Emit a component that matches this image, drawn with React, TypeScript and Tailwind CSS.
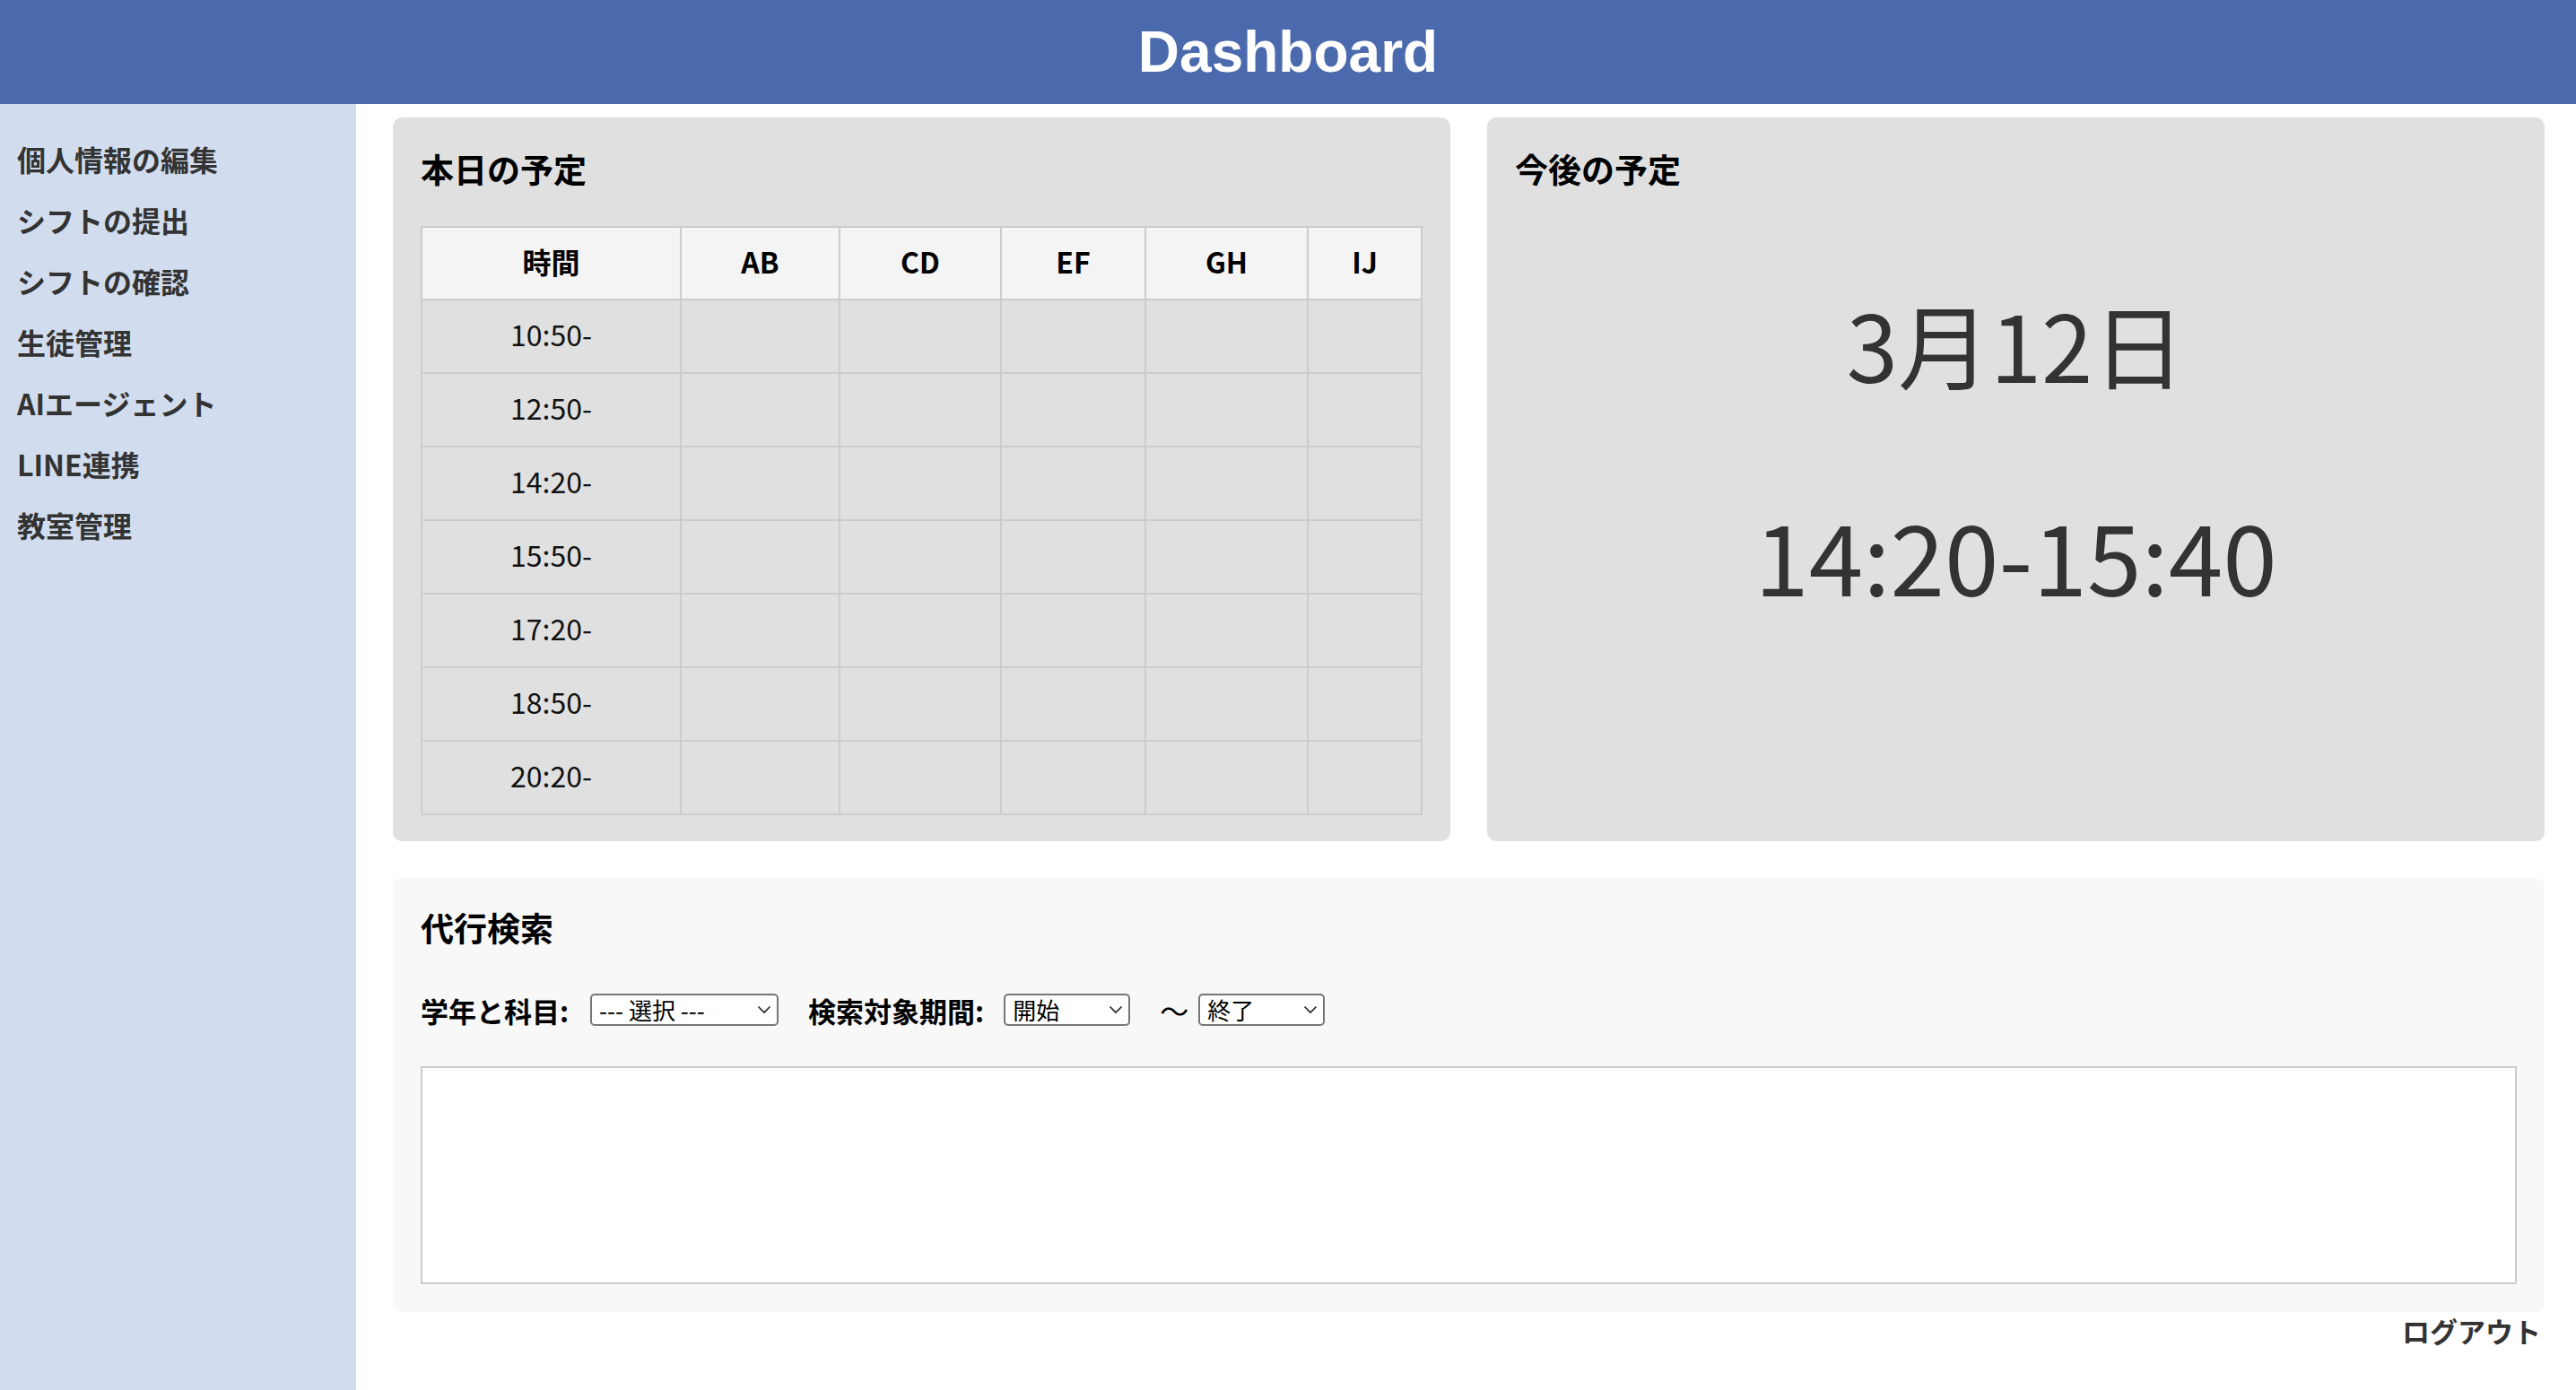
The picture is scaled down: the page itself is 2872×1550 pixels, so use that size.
import React from "react";

const navItems = [
  "個人情報の編集",
  "シフトの提出",
  "シフトの確認",
  "生徒管理",
  "AIエージェント",
  "LINE連携",
  "教室管理",
];

const times = ["10:50-", "12:50-", "14:20-", "15:50-", "17:20-", "18:50-", "20:20-"];
const cols = ["AB", "CD", "EF", "GH", "IJ"];

function Chevron() {
  return (
    <svg
      className="pointer-events-none absolute right-[8px] top-1/2 -translate-y-1/2"
      width="16"
      height="10"
      viewBox="0 0 16 10"
      fill="none"
    >
      <path d="M1.5 1.5 L8 8 L14.5 1.5" stroke="#222" strokeWidth="1.6" />
    </svg>
  );
}

function FakeSelect({ label, width }: { label: string; width: string }) {
  return (
    <div className={`relative h-[36px] ${width}`}>
      <select
        defaultValue=""
        className="h-full w-full appearance-none rounded-[5px] border-2 border-[#767676] bg-white pl-[8px] text-[26px] leading-[30px] text-black outline-none"
      >
        <option value="">{label}</option>
      </select>
      <Chevron />
    </div>
  );
}

export default function App() {
  return (
    <div className="flex min-h-screen w-full flex-col bg-white font-['Noto_Sans_CJK_JP','Noto_Sans',sans-serif] text-black">
      <header className="flex h-[116px] shrink-0 items-center justify-center bg-[#4a6aad]">
        <h1 className="font-['Liberation_Sans',Arial,sans-serif] text-[64px] font-bold leading-none text-white">
          Dashboard
        </h1>
      </header>

      <div className="flex flex-1">
        <aside className="w-[397px] shrink-0 bg-[#d1ddee] pt-[27px]">
          <ul>
            {navItems.map((item) => (
              <li
                key={item}
                className="flex h-[68px] items-center pl-[19px] text-[32px] font-bold text-[#333]"
              >
                {item}
              </li>
            ))}
          </ul>
        </aside>

        <main className="flex-1 pl-[41px] pr-[35px] pt-[15px]">
          <div className="grid h-[807px] grid-cols-2 gap-[41px]">
            <section className="rounded-[10px] bg-[#e0e0e0] px-[31px] pt-[27px]">
              <h3 className="flex h-[60px] items-center text-[37px] font-bold leading-none">
                本日の予定
              </h3>
              <table className="mt-[34px] w-full table-fixed border-collapse text-[32px]">
                <colgroup>
                  <col className="w-[289px]" />
                  <col className="w-[177px]" />
                  <col className="w-[180px]" />
                  <col className="w-[161px]" />
                  <col className="w-[181px]" />
                  <col />
                </colgroup>
                <thead>
                  <tr className="h-[81px] bg-[#f4f4f4]">
                    <th className="border-2 border-[#cccccc] pb-[6px] font-bold">時間</th>
                    {cols.map((c) => (
                      <th key={c} className="border-2 border-[#cccccc] pb-[6px] font-bold">
                        {c}
                      </th>
                    ))}
                  </tr>
                </thead>
                <tbody>
                  {times.map((t) => (
                    <tr key={t} className="h-[82px]">
                      <td className="border-2 border-[#cccccc] pb-[6px] text-center font-normal text-[#111]">
                        {t}
                      </td>
                      {cols.map((c) => (
                        <td key={c} className="border-2 border-[#cccccc]" />
                      ))}
                    </tr>
                  ))}
                </tbody>
              </table>
            </section>

            <section className="flex flex-col rounded-[10px] bg-[#e0e0e0] px-[31px] pt-[27px]">
              <h3 className="flex h-[60px] items-center text-[37px] font-bold leading-none">
                今後の予定
              </h3>
              <div className="mt-[105px] text-center text-[103px] leading-[120px] text-[#333]">
                3月12日
              </div>
              <div className="mt-[115px] text-center text-[109px] leading-[120px] text-[#333]">
                14:20-15:40
              </div>
            </section>
          </div>

          <section className="mt-[41px] flex h-[484px] flex-col rounded-[10px] bg-[#f8f8f8] px-[31px] pb-[30px] pt-[25px]">
            <h3 className="flex h-[60px] items-center text-[37px] font-bold leading-none">
              代行検索
            </h3>
            <div className="mt-[44px] flex h-[36px] items-center">
              <span className="text-[31px] font-bold leading-none">学年と科目:</span>
              <div className="ml-[24px]">
                <FakeSelect label="--- 選択 ---" width="w-[210px]" />
              </div>
              <span className="ml-[33px] text-[31px] font-bold leading-none">検索対象期間:</span>
              <div className="ml-[22px]">
                <FakeSelect label="開始" width="w-[141px]" />
              </div>
              <span className="ml-[33px] text-[32px] leading-none">〜</span>
              <div className="ml-[11px]">
                <FakeSelect label="終了" width="w-[141px]" />
              </div>
            </div>
            <textarea className="mt-[45px] h-[243px] w-full resize-none border-2 border-[#cccccc] bg-white outline-none" />
          </section>

          <div className="pr-[4px] text-right text-[31px] font-bold leading-[42px] text-[#333]">
            ログアウト
          </div>
        </main>
      </div>
    </div>
  );
}
